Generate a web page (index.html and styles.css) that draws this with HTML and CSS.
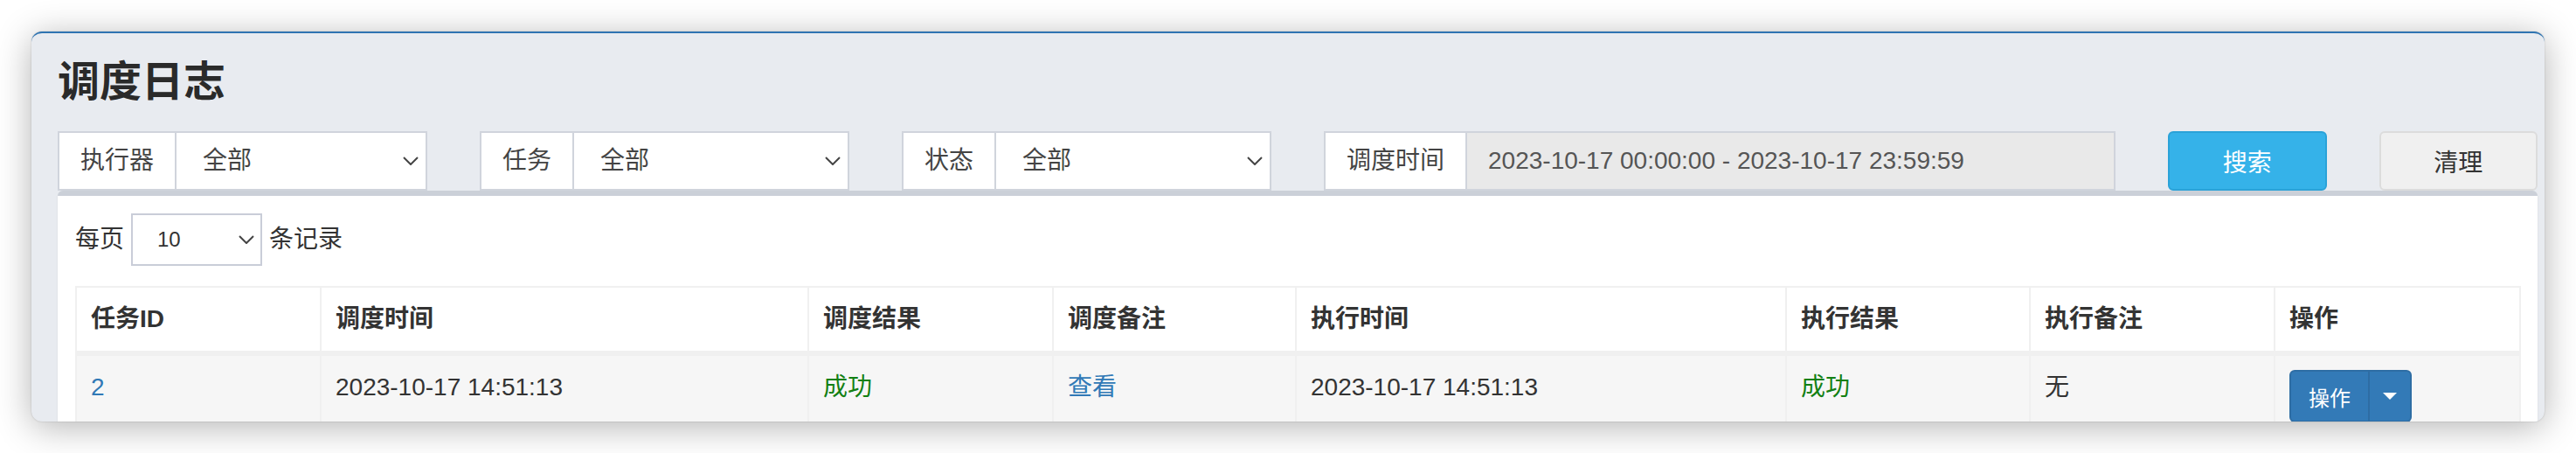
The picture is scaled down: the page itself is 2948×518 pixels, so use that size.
FILE: index.html
```html
<!DOCTYPE html>
<html lang="zh-CN">
<head>
<meta charset="utf-8">
<title>调度日志</title>
<link rel="stylesheet" href="styles.css">
</head>
<body>
<div class="window">
  <div class="page">
    <section class="content-header"><h1>调度日志</h1></section>
    <section class="content">
      <div class="filters">
        <div class="igroup span2">
          <span class="addon">执行器</span>
          <div class="fselect"><span>全部</span><svg class="chev" width="18" height="10" viewBox="0 0 18 10"><path d="M1 1l8 8 8-8" fill="none" stroke="#444" stroke-width="2"/></svg></div>
        </div>
        <div class="igroup span2">
          <span class="addon">任务</span>
          <div class="fselect"><span>全部</span><svg class="chev" width="18" height="10" viewBox="0 0 18 10"><path d="M1 1l8 8 8-8" fill="none" stroke="#444" stroke-width="2"/></svg></div>
        </div>
        <div class="igroup span2">
          <span class="addon">状态</span>
          <div class="fselect"><span>全部</span><svg class="chev" width="18" height="10" viewBox="0 0 18 10"><path d="M1 1l8 8 8-8" fill="none" stroke="#444" stroke-width="2"/></svg></div>
        </div>
        <div class="igroup span4">
          <span class="addon">调度时间</span>
          <div class="finput">2023-10-17 00:00:00 - 2023-10-17 23:59:59</div>
        </div>
        <button class="btn btn-search">搜索</button>
        <button class="btn btn-clear">清理</button>
      </div>
      <div class="box">
        <div class="length">
          <span>每页</span>
          <span class="lselect"><span>10</span><svg class="chev" width="18" height="10" viewBox="0 0 18 10"><path d="M1 1l8 8 8-8" fill="none" stroke="#444" stroke-width="2"/></svg></span>
          <span>条记录</span>
        </div>
        <table class="grid">
          <colgroup>
            <col class="w280"><col class="w558"><col class="w280"><col class="w278"><col class="w561"><col class="w279"><col class="w280"><col class="w281">
          </colgroup>
          <thead>
            <tr><th>任务ID</th><th>调度时间</th><th>调度结果</th><th>调度备注</th><th>执行时间</th><th>执行结果</th><th>执行备注</th><th>操作</th></tr>
          </thead>
          <tbody>
            <tr>
              <td><span class="link">2</span></td>
              <td>2023-10-17 14:51:13</td>
              <td><span class="ok">成功</span></td>
              <td><span class="link">查看</span></td>
              <td>2023-10-17 14:51:13</td>
              <td><span class="ok">成功</span></td>
              <td>无</td>
              <td><div class="btn-group"><button class="bop">操作</button><button class="bcaret"><span class="caret"></span></button></div></td>
            </tr>
          </tbody>
        </table>
      </div>
    </section>
  </div>
</div>
</body>
</html>
```
FILE: styles.css
```css
* { box-sizing: border-box; }
html, body { margin: 0; background: #fff; }
body {
  width: 2948px;
  height: 518px;
  overflow: hidden;
  font-family: "Liberation Sans", "Noto Sans CJK SC", sans-serif;
  font-size: 28px;
  line-height: 40px;
  color: #333;
  padding-top: 36px;
}
.window {
  margin-left: 36px;
  width: 2876px;
  height: 446px;
  border-radius: 12px;
  overflow: hidden;
  background: #e8ebf0;
  border-top: 2px solid #2f74b2;
  box-shadow: 0 6px 40px rgba(0, 0, 0, 0.30), 0 0 2px rgba(0, 0, 0, 0.2);
}
.page { width: 2898px; }
.content-header { padding: 30px 30px 0; }
.content-header h1 {
  margin: 0;
  font-size: 48px;
  line-height: 52px;
  font-weight: 600;
  color: #2a2a2a;
}
.content { padding: 30px 30px 0; }
.filters {
  display: grid;
  grid-template-columns: repeat(12, 181.5px);
  column-gap: 60px;
  height: 68px;
}
.span2 { grid-column: span 2; }
.span4 { grid-column: span 4; }
.igroup { display: flex; height: 68px; }
.addon {
  display: flex;
  align-items: center;
  padding: 0 24px;
  border: 2px solid #d0d4dc;
  background: #fff;
  color: #444;
  white-space: nowrap;
}
.fselect {
  flex: 1;
  display: flex;
  align-items: center;
  justify-content: space-between;
  padding: 0 8px 0 30px;
  border: 2px solid #d0d4dc;
  border-left: 0;
  background: #fff;
  color: #444;
}
.finput {
  flex: 1;
  display: flex;
  align-items: center;
  padding-left: 24px;
  border: 2px solid #d0d4dc;
  border-left: 0;
  background: #e9e9e9;
  color: #555;
  white-space: nowrap;
}
.btn {
  height: 68px;
  border-radius: 6px;
  font-family: inherit;
  font-size: 28px;
  padding: 0;
}
.btn-search { background: #35b2e9; border: 2px solid #2aa2d8; color: #fff; }
.btn-clear { background: #f0f0f0; border: 2px solid #dcdcdc; color: #333; }
.box {
  background: #fff;
  border-top: 6px solid #cbd0d8;
  border-radius: 6px;
  padding: 20px;
  height: 400px;
  box-shadow: 0 2px 2px rgba(0, 0, 0, 0.1);
}
.length { display: flex; align-items: center; height: 60px; }
.lselect {
  width: 150px;
  height: 60px;
  margin: 0 8px;
  display: flex;
  align-items: center;
  justify-content: space-between;
  padding: 0 7px 0 28px;
  border: 2px solid #c9cdd8;
  font-size: 24px;
  color: #333;
}
.grid {
  margin-top: 23px;
  width: 2798px;
  table-layout: fixed;
  border-collapse: collapse;
}
.w280 { width: 280px; }
.w558 { width: 558px; }
.w278 { width: 278px; }
.w561 { width: 561px; }
.w279 { width: 279px; }
.w281 { width: 281px; }
.grid th, .grid td {
  border: 2px solid #f0f0f0;
  padding: 16px;
  text-align: left;
  vertical-align: top;
  line-height: 40px;
  white-space: nowrap;
}
.grid th { font-weight: 700; color: #333; border-bottom-width: 6px; }
.grid tbody tr { background: #f6f6f6; }
.link { color: #3079b6; }
.ok { color: #138013; }
.btn-group { display: inline-flex; vertical-align: top; }
.bop, .bcaret {
  height: 60px;
  background: #337ab7;
  border: 2px solid #2e6da4;
  color: #fff;
  font-family: inherit;
  font-size: 24px;
}
.bop { padding: 0 20px; border-radius: 6px 0 0 6px; }
.bcaret {
  width: 50px;
  margin-left: -2px;
  padding: 0;
  border-radius: 0 6px 6px 0;
  display: flex;
  align-items: center;
  justify-content: center;
}
.caret {
  width: 0;
  height: 0;
  border-top: 8px solid #fff;
  border-left: 8px solid transparent;
  border-right: 8px solid transparent;
}
```
